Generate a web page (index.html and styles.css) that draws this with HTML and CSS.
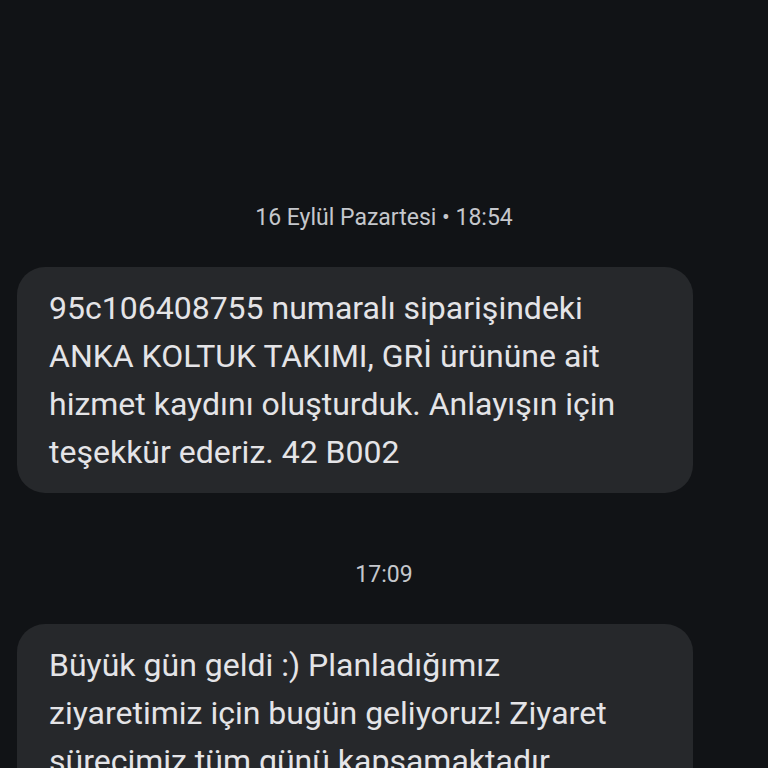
FILE: index.html
```html
<!DOCTYPE html>
<html lang="tr">
<head>
  <meta charset="UTF-8" />
  <title>Mesajlar</title>
  <link rel="stylesheet" href="styles.css">
</head>
<body>

  <div class="thread">
    <div class="stamp">16 Eylül Pazartesi • 18:54</div>
    <div class="bubble">
      95c106408755 numaralı siparişindeki ANKA KOLTUK TAKIMI, GRİ ürününe ait hizmet kaydını oluşturduk. Anlayışın için teşekkür ederiz. 42 B002
    </div>

    <div class="stamp">17:09</div>
    <div class="bubble">
      Büyük gün geldi :) Planladığımız ziyaretimiz için bugün geliyoruz! Ziyaret sürecimiz tüm günü kapsamaktadır.
    </div>
  </div>

</body>
</html>
```

FILE: styles.css
```css
html, body {
  height: 100%;
}

body {
  margin: 0;
  background: #111316;
  overflow: hidden;
  font-family: Roboto, "Noto Sans", sans-serif;
}

.thread {
  display: flex;
  flex-direction: column;
  padding: 200px 75px 0 17px;
}

.stamp {
  align-self: center;
  margin-left: 58px; /* centre on the window, not the column */
  height: 36px;
  line-height: 36px;
  font-size: 23px;
  color: #c5c7cc;
}

.bubble {
  margin: 31px 0 64px;
  padding: 17px 32px;
  background: #26282b;
  border-radius: 28px;
  color: #e4e4e7;
  font-size: 32px;
  line-height: 48px;
}
```
